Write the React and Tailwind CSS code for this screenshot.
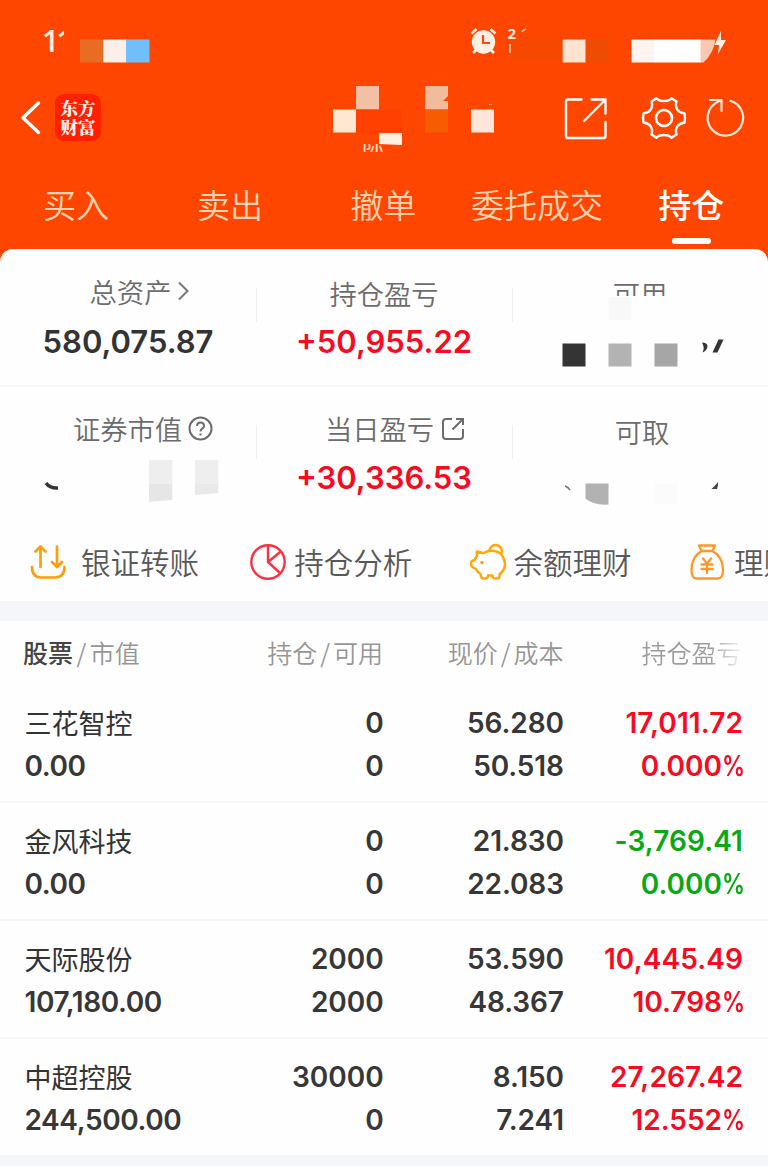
import React from "react";

const CJK = "font-['Noto_Sans_CJK_SC',sans-serif]";
const NUM = "font-['Inter',sans-serif] font-semibold";

function StatusBar() {
  return (
    <div className="flex h-[74px] items-start justify-between pl-[42px] pr-[42px]">
      <div className="mt-[25px] h-[32px] w-[22px] overflow-hidden font-['Open_Sans',sans-serif] text-[30px] font-semibold leading-[32px] tracking-[-3px] text-[#ffeede] whitespace-nowrap">
        11
      </div>
      <svg className="mt-[26px]" width="256" height="40" viewBox="470 26 256 40">
        <circle cx="483.5" cy="42" r="11.7" fill="#fff0e6" />
        <path d="M483 35v8h7" fill="none" stroke="#ff4a08" strokeWidth="2.2" />
        <path d="M471.5 33.5l5-4.5M495.500 33.500l-5-4.500M476 50l-3 3M491 50l3 3" stroke="#fff0e6" strokeWidth="2.6" />
        <text x="507.500" y="38.500" fontSize="15" fontWeight="700" fill="#ffeede" fontFamily="Open Sans">2</text>
        <path d="M522 31.500q2-2 4-2.500" stroke="#ffd9c0" strokeWidth="1.600" fill="none" />
        <path d="M510 44v9" stroke="#ffd9c0" strokeWidth="1.500" />
        <path d="M721 31l-6.500 14h4.500l-1 9 8-14h-5z" fill="#fff0e6" />
      </svg>
    </div>
  );
}

function Mosaic() {
  return (
    <svg className="pointer-events-none absolute left-0 top-0" width="768" height="162" viewBox="0 0 768 162">
      <rect x="80" y="39.500" width="23.500" height="23" fill="#e86c24" />
      <rect x="103.200" y="39.500" width="23" height="23" fill="#fceee8" />
      <rect x="126" y="39.500" width="23.500" height="23" fill="#70befa" />
      <path d="M511 40h52v22h-40q-9 0-11-7z" fill="#f74800" />
      <rect x="562.700" y="39.500" width="23" height="23" fill="#ffe2d0" />
      <rect x="585.700" y="39.500" width="23" height="23" fill="#ee4b03" />
      <rect x="631.500" y="39.500" width="23" height="23" fill="#fff4ef" />
      <rect x="654" y="39.500" width="47" height="23" fill="#fff" />
      <path d="M700.500 39.500h15q-2 14-12 23h-3z" fill="#f8c8b0" />
      <rect x="356" y="86" width="23" height="23.500" fill="#f2c0a2" />
      <rect x="333" y="109.500" width="23" height="23" fill="#ffe8d2" />
      <rect x="356" y="109.500" width="46" height="23.500" fill="#ff4000" />
      <path d="M379 133h23v12l-23-1z" fill="#fff0e2" />
      <path d="M425 86h23v10l-5 5h5v8.500h-23z" fill="#f2bc9c" />
      <rect x="425" y="109.500" width="23" height="23" fill="#f75c02" />
      <rect x="471" y="109.500" width="23" height="23" fill="#ffe6d8" />
      <path d="M489 104.500h3" stroke="#ffa070" strokeWidth="1" />
    </svg>
  );
}

function NavBar() {
  return (
    <div className="flex h-[88px] items-start pl-[20px] pr-[23px]">
      <svg className="mt-[26px]" width="21" height="36" viewBox="0 0 21 36">
        <path d="M18.500 3L3 17.800l15.500 14.700" fill="none" stroke="#fff" strokeWidth="3.400" strokeLinecap="round" strokeLinejoin="round" />
      </svg>
      <div className="ml-[14px] mt-[20px] flex h-[47px] w-[46px] flex-col items-center justify-center rounded-[9px] bg-[#ff2000] pb-[2px] font-['Noto_Serif_CJK_SC','Noto_Sans_CJK_SC',serif] text-[17.500px] font-black leading-[19px] text-[#fff4ec]">
        <span>东方</span>
        <span>财富</span>
      </div>
      <div className="ml-[261px] mt-[70px] flex h-[8px] w-[24px] items-end overflow-hidden font-['Noto_Sans_CJK_SC',sans-serif] text-[22px] leading-[18px] text-[#ffdcc4]">
        <span className="h-[18px]">际</span>
      </div>
      <svg className="ml-auto mt-[22px]" width="182" height="46" viewBox="563 96 182 46">
        <g fill="none" stroke="#fff" strokeLinecap="round" strokeLinejoin="round">
          <path d="M581.500 99.500H568q-2 0-2 2V136q0 2 2 2h35.500q2 0 2-2v-14M591.500 99.500H605.500v14M605 100L584 121" strokeWidth="2.400" />
          <path d="M656.500 98.200C659.500 102 668.500 102 671.500 98.200L676.500 101.500C674.500 108 678 112.500 684.500 113.500Q685.500 118 684.500 122.500C678 123.500 674.500 128 676.500 134.500L671.500 137.800C668.500 134 659.500 134 656.500 137.800L651.500 134.500C653.500 128 650 123.500 643.500 122.500Q642.500 118 643.500 113.500C650 112.500 653.500 108 651.500 101.500Z" strokeWidth="2.400" />
          <circle cx="664" cy="118" r="8" strokeWidth="2.600" />
          <path d="M730.500 100.900A17.700 17.700 0 1 1 717.500 102L721 100M710 100H721.500V111" strokeWidth="2.200" stroke="#ffe8da" />
        </g>
      </svg>
    </div>
  );
}

const tabs = ["买入", "卖出", "撤单", "委托成交", "持仓"];

function Tabs() {
  return (
    <div className={`grid h-[87px] grid-cols-5 ${CJK}`}>
      {tabs.map((t, i) => {
        const on = i === tabs.length - 1;
        return (
          <div key={t} className="flex flex-col items-center">
            <span className={`mt-[20px] whitespace-nowrap text-[33px] leading-[44px] ${on ? "font-medium text-white" : "-ml-px font-[350] text-[#ffd2b0]"}`}>{t}</span>
            {on && <span className="mt-[12px] h-[6px] w-[39px] rounded-full bg-white" />}
          </div>
        );
      })}
    </div>
  );
}

function Label({ children, className = "" }) {
  return <div className={`flex h-[40px] items-center whitespace-nowrap text-[27.300px] font-[350] leading-[40px] text-[#6c6c6c] ${CJK} ${className}`}>{children}</div>;
}

function Total({ children, className = "" }) {
  return <div className={`h-[40px] whitespace-nowrap text-[31px] leading-[40px] ${NUM} ${className}`}>{children}</div>;
}

function Summary() {
  return (
    <>
      <div className="grid h-[138px] grid-cols-3 border-b-2 border-[#f6f6f6] pt-[22px]">
        <div className="flex h-[110px] flex-col items-center">
          <Label className="ml-[24px]">
            总资产
            <svg className="ml-[6px]" width="13" height="22" viewBox="0 0 13 22"><path d="M2 2.500l8.500 8.500L2 19.500" fill="none" stroke="#777" strokeWidth="2" /></svg>
          </Label>
          <Total className="mt-[11px] text-[#333]">580,075.87</Total>
        </div>
        <div className="relative flex h-[110px] flex-col items-center">
          <span className="absolute left-0 top-[17px] h-[34px] w-px bg-[#f0f0f0]" />
          <span className="absolute -right-px top-[17px] h-[34px] w-px bg-[#f0f0f0]" />
          <Label className="mt-[2px]">持仓盈亏</Label>
          <Total className="mt-[9px] text-[#f80a20]">+50,955.22</Total>
        </div>
        <div className="flex h-[110px] flex-col items-center">
          <div className="h-[25px] overflow-hidden">
            <Label className="mt-[1.500px]">可用</Label>
          </div>
          <svg width="256" height="74" viewBox="512 296 256 74">
            <rect x="608.500" y="297" width="23" height="23" fill="#f8f8f8" />
            <rect x="562.500" y="343.500" width="23" height="23" fill="#343434" />
            <rect x="608.500" y="343.500" width="23" height="23" fill="#b3b3b3" />
            <rect x="654.500" y="343.500" width="23" height="23" fill="#a6a6a6" />
            <path d="M702 342.500q4.500 0 5.500 3 0 5-5 7 2.500-5-.5-10z" fill="#333" />
            <path d="M718.500 339.500h5l-6 13h-5z" fill="#333" />
          </svg>
        </div>
      </div>
      <div className="grid h-[131px] grid-cols-3 pt-[21px]">
        <div className="flex flex-col items-center">
          <Label className="ml-[30px]">
            证券市值
            <svg className="ml-[6px] mt-px" width="25" height="25" viewBox="0 0 25 25" fill="none" stroke="#6c6c6c" strokeWidth="2">
              <circle cx="12.500" cy="12.500" r="11" />
              <path d="M9 10q0-3.500 3.500-3.500T16 10q0 1.500-1.800 2.700T12.500 15.500M12.500 17.500v2" />
            </svg>
          </Label>
          <svg className="mt-[11px]" width="256" height="46" viewBox="0 459 256 46">
            <path d="M46 483q4 5.500 12 5" stroke="#333" strokeWidth="3.500" fill="none" />
            <path d="M149 460h23.300v23.500H149zM195 460h23.300v23.500H195z" fill="#eee" />
            <path d="M149 483.500h23.300v16.500L149 501.800z" fill="#e6e6e6" />
            <path d="M195 483.500h23.300v9.500L195 495z" fill="#e9e9e9" />
          </svg>
        </div>
        <div className="relative flex flex-col items-center">
          <span className="absolute left-0 top-[17px] h-[34px] w-px bg-[#f0f0f0]" />
          <span className="absolute -right-px top-[17px] h-[34px] w-px bg-[#f0f0f0]" />
          <Label className="ml-[22px]">
            当日盈亏
            <svg className="ml-[7px] mt-px" width="24" height="24" viewBox="0 0 24 24" fill="none" stroke="#6c6c6c" strokeWidth="2">
              <path d="M11 2H5Q2 2 2 5v14q0 3 3 3h14q3 0 3-3v-7M15 2h7v6M22 2L11.500 12.500" />
            </svg>
          </Label>
          <Total className="mt-[10px] text-[#f80a20]">+30,336.53</Total>
        </div>
        <div className="flex flex-col items-center">
          <Label className="ml-[4px] mt-[2.500px]">可取</Label>
          <svg className="mt-[30.500px]" width="256" height="26" viewBox="512 481 256 26">
            <path d="M565 486q3 1 5 4" stroke="#777" strokeWidth="1.500" fill="none" />
            <path d="M585.500 483.500h23v21q-15 1-23-6z" fill="#b2b2b2" />
            <rect x="654.500" y="483.500" width="22.500" height="21" fill="#fbfbfb" />
            <path d="M718 482v3l-1 4h-5.500l4-4z" fill="#444" />
          </svg>
        </div>
      </div>
    </>
  );
}

const TransferIcon = () => (
  <svg width="38" height="38" viewBox="29 543 38 38" fill="none" stroke="#ff9d0a" strokeWidth="2.700" strokeLinecap="round" strokeLinejoin="round">
    <path d="M40.500 567V547M35.500 551.500l5-5 5 5M57 546.500v20M52 562l5 5 5-5M32 567q0 10 9 10.500h14q9.500-.5 9.500-10.500" />
  </svg>
);
const PieIcon = () => (
  <svg width="38" height="38" viewBox="249 543 38 38" fill="none" stroke="#f83240" strokeWidth="2.400" strokeLinejoin="round">
    <circle cx="268" cy="562" r="16.700" />
    <path d="M268 545.300V562l12.500 11.500M268 562l12.800-10.500" />
  </svg>
);
const PigIcon = () => (
  <svg width="38" height="38" viewBox="468 543 38 38" fill="none" stroke="#ffa808" strokeWidth="2.500" strokeLinejoin="round" strokeLinecap="round">
    <path d="M475.800 551.500l6.700 1.500C490 549 498.500 550.500 502 557q4.500 9-1 15l-2.500 2.500v2q0 2-2 2h-3q-1.500 0-2-3h-4.500q-.5 3-2.500 3h-2.500q-2 0-2.500-4.500-3-1.500-4.500-5l-3-1.500q-2-1-2-5 .2-1.500 3.500-2.500 1-2.500 2.500-4z" />
    <path d="M488.500 550q1.500-5 6.500-5 7 1 5.500 8.500" />
    <circle cx="481" cy="562.500" r="1.800" fill="#ffa808" stroke="none" />
  </svg>
);
const BagIcon = () => (
  <svg width="38" height="38" viewBox="688 543 38 38" fill="none" stroke="#ff9828" strokeWidth="2.300" strokeLinejoin="round" strokeLinecap="round">
    <path d="M699 545.500h16l-2.500 5.500h-11zM701.500 551Q691.500 557 691.500 570q0 8.500 5 8.500h21q5.500 0 5.500-8.500 0-13-10.500-19" />
    <path d="M703 558.500l4 5 4-5M707 563.500v9.500M701.500 564.500h11M701.500 569h11" />
  </svg>
);

const actions = [
  [TransferIcon, "银证转账", "ml-[14px]"],
  [PieIcon, "持仓分析", "ml-[7.500px]"],
  [PigIcon, "余额理财", "ml-[7px]"],
  [BagIcon, "理财", "ml-[7.500px]"],
];

function Actions() {
  return (
    <div className={`flex h-[83px] overflow-hidden pl-[29px] ${CJK}`}>
      {actions.map(([Icon, text, gap]) => (
        <div key={text} className="flex h-[88px] w-[219.800px] shrink-0 items-center">
          <Icon />
          <span className={`-mt-[2px] whitespace-nowrap text-[29.500px] font-[350] leading-[44px] text-[#585858] ${gap}`}>{text}</span>
        </div>
      ))}
    </div>
  );
}

const rows = [
  ["三花智控", "0.00", "0", "0", "56.280", "50.518", "17,011.72", "0.000%", 1],
  ["金风科技", "0.00", "0", "0", "21.830", "22.083", "-3,769.41", "0.000%", 0],
  ["天际股份", "107,180.00", "2000", "2000", "53.590", "48.367", "10,445.49", "10.798%", 1],
  ["中超控股", "244,500.00", "30000", "0", "8.150", "7.241", "27,267.42", "12.552%", 1],
];

function Holdings() {
  return (
    <>
      <div className={`grid h-[64px] grid-cols-4 px-[25px] pt-[11px] text-right text-[25px] font-[350] leading-[40px] text-[#969696] whitespace-nowrap ${CJK}`}>
        <div className="-ml-[2px] text-left"><span className="font-medium text-[#444]">股票</span><span className="mx-[3.500px]">/</span>市值</div>
        <div className="pr-px">持仓<span className="mx-[3px]">/</span>可用</div>
        <div>现价<span className="mx-[3px]">/</span>成本</div>
        <div className="pr-[1.500px]"><span className="bg-[linear-gradient(90deg,#9c9c9c_68%,#f4f4f4_100%)] bg-clip-text text-transparent">持仓盈亏</span></div>
      </div>
      {rows.map((r, i) => (
        <div key={r[0]} className={`grid grid-cols-4 pl-[24.500px] pr-[25px] pt-[17px] text-right text-[28px] leading-[43.300px] text-[#373737] whitespace-nowrap ${NUM} ${i < 3 ? "h-[118px] border-b-2 border-[#f6f6f6]" : "h-[116px]"}`}>
          <div className="text-left">
            <div className={`-mt-px h-[44px] text-[27px] font-normal text-[#333] ${CJK}`}>{r[0]}</div>
            <div className="tracking-[-0.4px]">{r[1]}</div>
          </div>
          <div><div>{r[2]}</div><div>{r[3]}</div></div>
          <div className="-mr-[0.5px] tracking-[-0.1px]"><div>{r[4]}</div><div>{r[5]}</div></div>
          <div className={r[8] ? "text-[#f80a20]" : "text-[#0aa814]"}>
            <div className="tracking-[0.1px]">{r[6]}</div>
            <div className="-mr-px">{r[7].slice(0, -1)}<span className="inline-block w-[22px] origin-left scale-x-[0.82] text-left">%</span></div>
          </div>
        </div>
      ))}
    </>
  );
}

export default function App() {
  return (
    <div className="h-[1166px] w-[768px] overflow-hidden bg-[#ff4600]">
      <header className="relative">
        <StatusBar />
        <NavBar />
        <Tabs />
        <Mosaic />
      </header>
      <main className="rounded-t-[13px] bg-[#fefefe]">
        <Summary />
        <Actions />
        <div className="h-[20px] bg-[#f5f6f9]" />
        <Holdings />
        <div className="h-[11px] bg-[#f5f6f9]" />
      </main>
    </div>
  );
}
